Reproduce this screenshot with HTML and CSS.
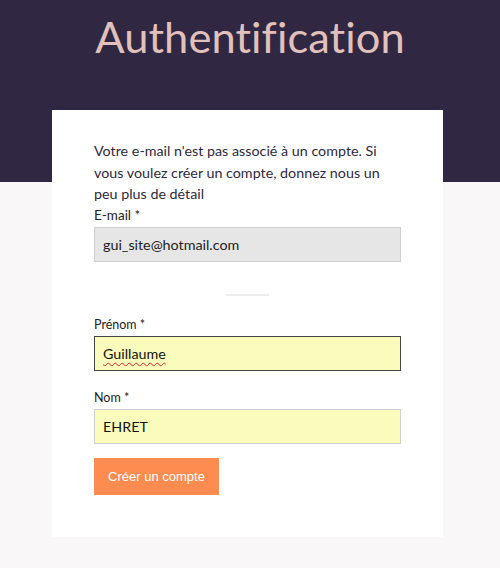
FILE: index.html
```html
<!DOCTYPE html>
<html lang="fr">
<head>
<meta charset="utf-8">
<title>Authentification</title>
<link rel="stylesheet" href="styles.css">
</head>
<body>
<header class="hero">
  <h1 class="title">Authentification</h1>
</header>
<main class="card">
  <p class="intro">Votre e-mail n'est pas associé à un compte. Si vous voulez créer un compte, donnez nous un peu plus de détail</p>
  <label class="label label-email">E-mail *</label>
  <div class="input input-disabled">gui_site@hotmail.com</div>
  <hr class="sep">
  <label class="label">Prénom *</label>
  <div class="input input-focus"><span class="spell">Guillaume</span></div>
  <label class="label">Nom *</label>
  <div class="input">EHRET</div>
  <button class="btn">Créer un compte</button>
</main>
</body>
</html>
```
FILE: styles.css
```css
html, body {
  margin: 0;
  padding: 0;
}
body {
  width: 500px;
  height: 568px;
  overflow: hidden;
  background: linear-gradient(#302843 0, #302843 182px, #f9f7f7 182px);
  font-family: Lato, "Open Sans", sans-serif;
  color: #2e2940;
}
.hero {
  height: 110px;
  text-align: center;
}
.title {
  margin: 0;
  padding-top: 9px;
  font-size: 43.4px;
  line-height: 54px;
  font-weight: 400;
  color: #e2c0bb;
  letter-spacing: 0.1px;
}
.card {
  margin-left: 52px;
  width: 391px;
  height: 427px;
  background: #fff;
  box-sizing: border-box;
  padding: 30px 42px 0 42px;
  display: flex;
  flex-direction: column;
  align-items: flex-start;
}
.intro {
  margin: 0;
  font-size: 14.3px;
  line-height: 21.5px;
  width: 300px;
}
.label {
  display: block;
  font-size: 12.5px;
  line-height: 16px;
  margin-top: 19px;
  margin-bottom: 3px;
  color: #222;
}
.label-email {
  font-size: 13.5px;
  line-height: 18px;
  margin-top: 1px;
  margin-bottom: 3px;
}
.input {
  box-sizing: border-box;
  width: 307px;
  height: 35px;
  border: 1px solid #cfcfcf;
  background: #f9fcbb;
  padding: 0 8px;
  font-size: 14.3px;
  line-height: 33px;
  color: #111;
}
.input-disabled {
  background: #e6e6e6;
  color: #222;
}
.input-focus {
  border-color: #444;
}
.spell {
  text-decoration: underline wavy #e02020;
  text-decoration-thickness: 1px;
  text-underline-offset: 3px;
}
.sep {
  align-self: center;
  width: 43px;
  height: 2px;
  border: 0;
  background: #eeeeee;
  margin: 32px 0 2px 0;
}
.btn {
  margin-top: 14px;
  width: 125px;
  height: 37px;
  border: 0;
  background: #fe8c50;
  color: #fff;
  font-family: "Liberation Sans", Arial, sans-serif;
  font-size: 13px;
  padding: 0;
}
```
